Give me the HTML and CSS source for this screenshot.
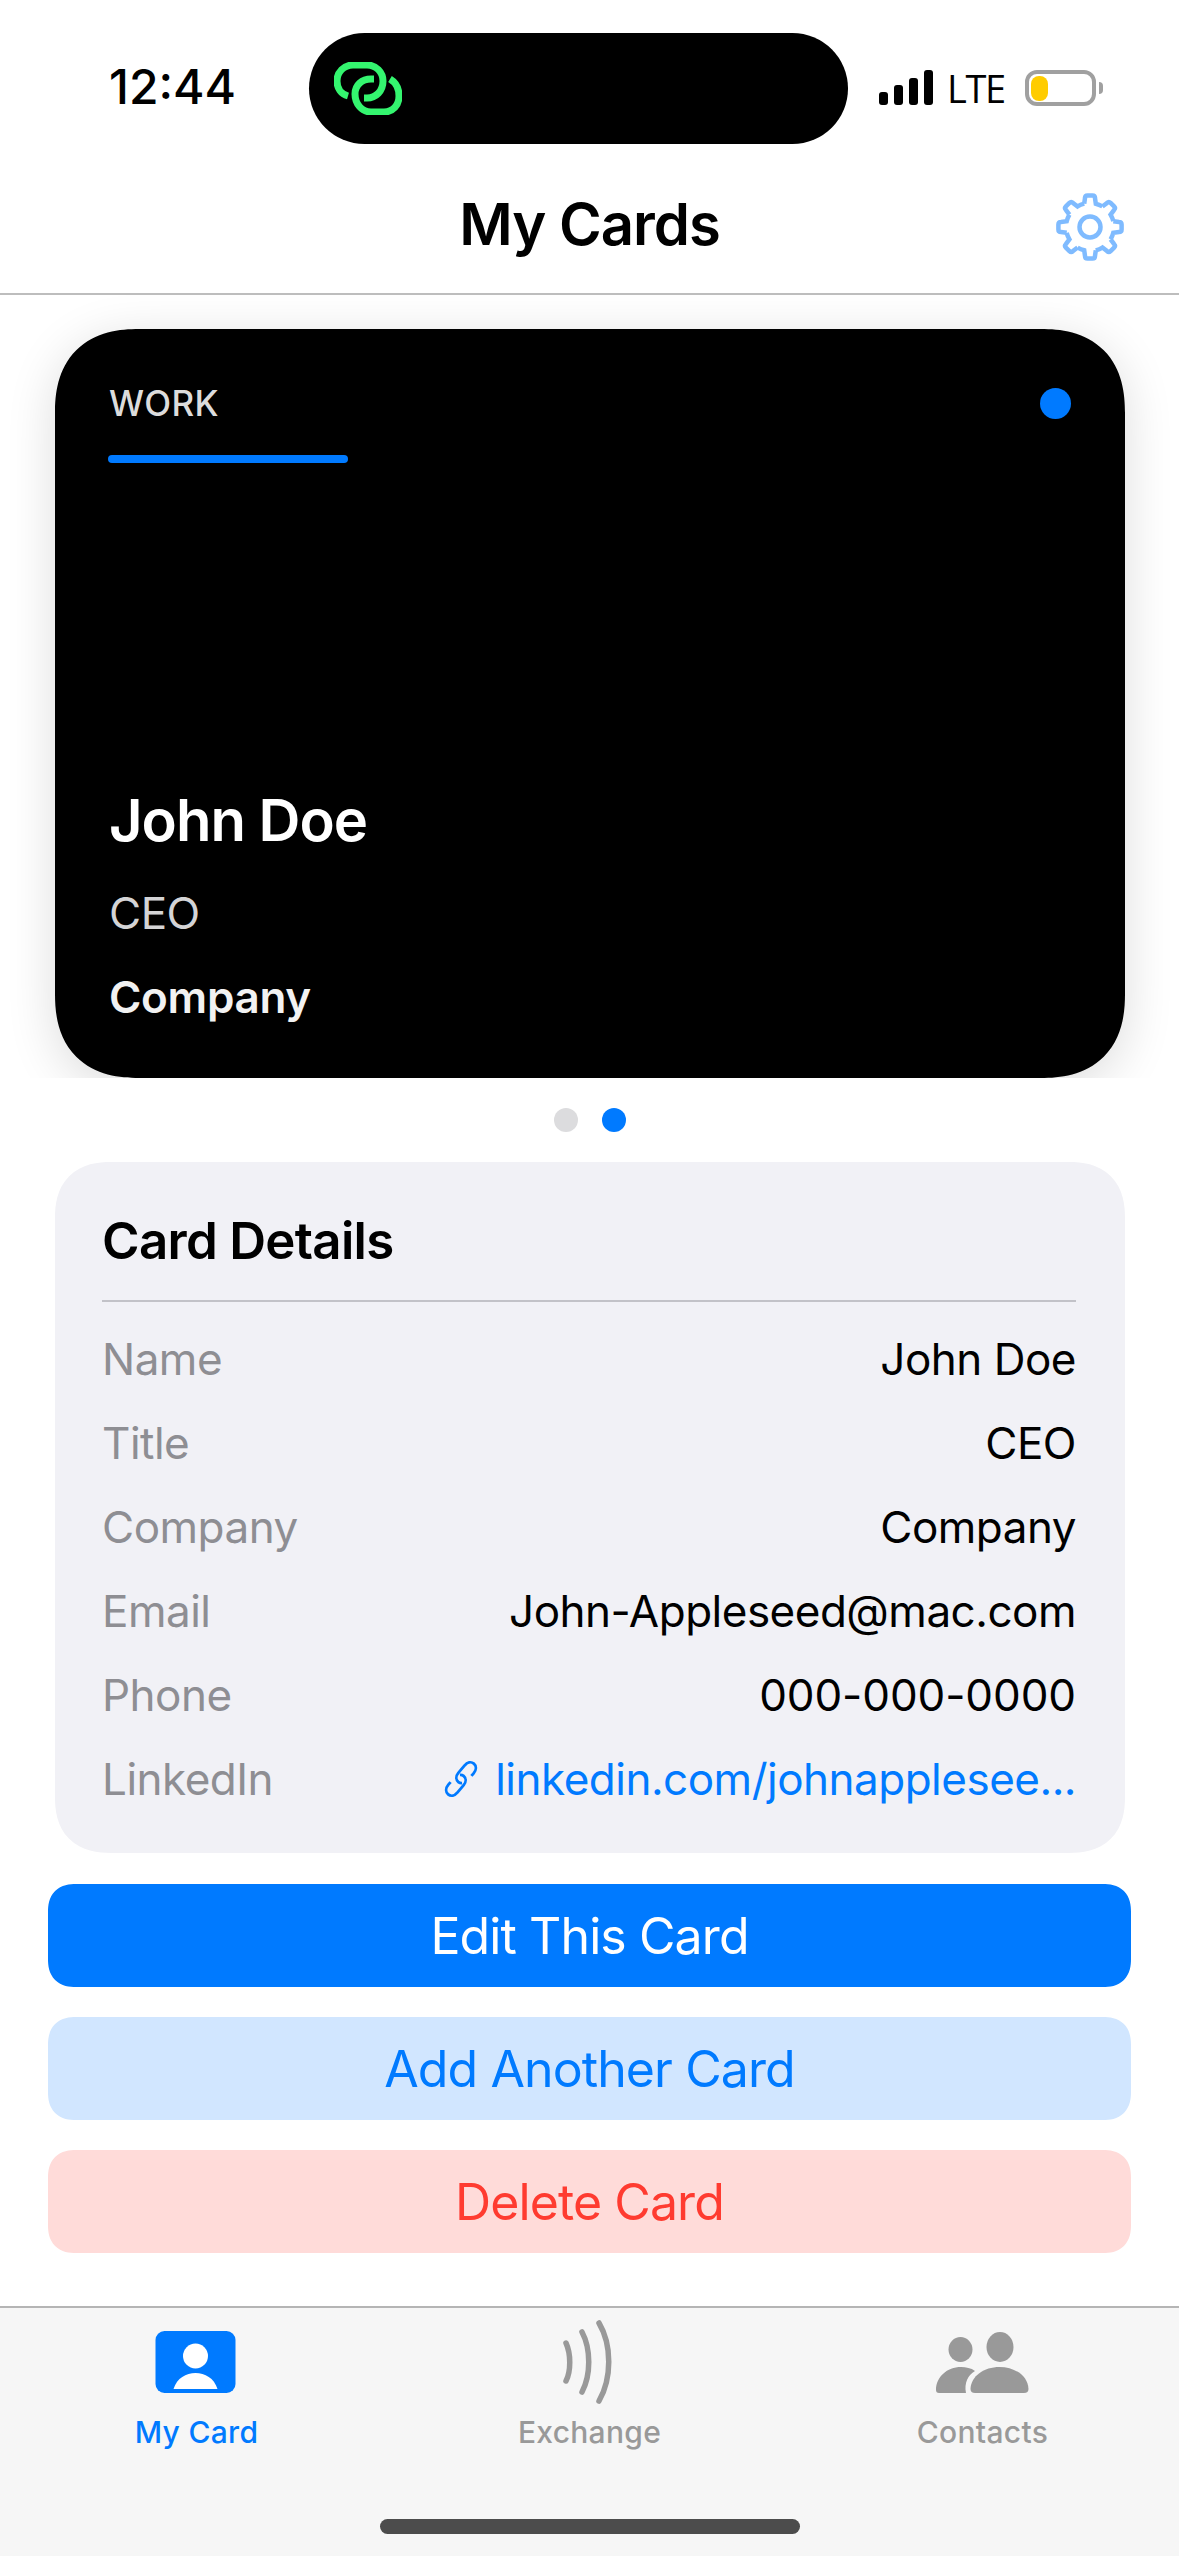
FILE: index.html
```html
<!DOCTYPE html>
<html lang="en">
<head>
    <meta charset="UTF-8">
    <meta name="viewport" content="width=device-width, initial-scale=1.0">
    <title>My Cards</title>
    <link rel="stylesheet" href="styles.css">
</head>
<body>
    <div class="screen">
        <div class="statusBar">
            <span class="clock">12:44</span>
            <div class="island">
                <svg class="islandIcon" width="68" height="53" viewBox="0 0 68 53">
                    <path d="M14 34C7 32 3 26 3 19C3 10 10 3 19 3H33C42 3 49 10 49 19C49 29 42 36 33 36H30"/>
                    <path d="M40 17H37C28 17 21 23 21 32C21 42 28 50 37 50H50C59 50 65 43 65 34C65 26 61 20 56 17"/>
                </svg>
            </div>
            <div class="statusRight">
                <div class="signal">
                    <i class="bar1"></i><i class="bar2"></i><i class="bar3"></i><i class="bar4"></i>
                </div>
                <span class="lte">LTE</span>
                <div class="battery"><div class="batteryFill"></div></div>
                <div class="batteryNub"></div>
            </div>
        </div>

        <header class="navBar">
            <h1>My Cards</h1>
            <svg class="gear" width="70" height="70" viewBox="-35 -35 70 70">
                <defs>
                    <path id="tooth" d="M-5.8 -23.3L-5 -29Q-5 -31.6 -2.5 -31.6H2.5Q5 -31.6 5 -29L5.8 -23.3Q9 -22.5 12.4 -20.6"/>
                </defs>
                <use href="#tooth"/>
                <use href="#tooth" transform="rotate(45)"/>
                <use href="#tooth" transform="rotate(90)"/>
                <use href="#tooth" transform="rotate(135)"/>
                <use href="#tooth" transform="rotate(180)"/>
                <use href="#tooth" transform="rotate(225)"/>
                <use href="#tooth" transform="rotate(270)"/>
                <use href="#tooth" transform="rotate(315)"/>
                <circle r="10.5"/>
            </svg>
        </header>

        <div class="carousel">
            <div class="bizCard">
                <div class="cardTop">
                    <div>
                        <div class="cardTag">WORK</div>
                        <div class="cardLine"></div>
                    </div>
                    <div class="cardDot"></div>
                </div>
                <div class="cardInfo">
                    <div class="cardName">John Doe</div>
                    <div class="cardTitle">CEO</div>
                    <div class="cardCompany">Company</div>
                </div>
            </div>
        </div>

        <div class="pager">
            <span class="pagerDot"></span>
            <span class="pagerDot active"></span>
        </div>

        <section class="details">
            <h2>Card Details</h2>
            <div class="row"><span class="rowLabel">Name</span><span>John Doe</span></div>
            <div class="row"><span class="rowLabel">Title</span><span>CEO</span></div>
            <div class="row"><span class="rowLabel">Company</span><span>Company</span></div>
            <div class="row"><span class="rowLabel">Email</span><span>John-Appleseed@mac.com</span></div>
            <div class="row"><span class="rowLabel">Phone</span><span class="rowPhone">000-000-0000</span></div>
            <div class="row">
                <span class="rowLabel">LinkedIn</span>
                <span class="rowLink">
                    <svg class="linkIcon" width="36" height="36" viewBox="0 0 36 36">
                        <g transform="rotate(-50 18 18)">
                            <path d="M9 12H5.5C1 12 -2 14.5 -2 18C-2 21.500 1 24 5.500 24H15C19 24 22 21.500 22 18C22 16.500 21.500 15.500 20.500 14.500"/>
                            <path d="M27 24H30.500C35 24 38 21.500 38 18C38 14.500 35 12 30.500 12H21C17 12 14 14.500 14 18C14 19.500 14.500 20.500 15.500 21.500"/>
                        </g>
                    </svg>
                    linkedin.com/johnapplesee...
                </span>
            </div>
        </section>

        <div class="actions">
            <button class="btn btnBlue">Edit This Card</button>
            <button class="btn btnSoft">Add Another Card</button>
            <button class="btn btnRed">Delete Card</button>
        </div>

        <nav class="tabBar">
            <div class="tabs">
                <div class="tab tabActive">
                    <svg width="80" height="80" viewBox="0 0 80 80">
                        <rect x="-1.5" y="8" width="80" height="62" rx="9" fill="#007aff"/>
                        <circle cx="38.500" cy="33" r="12.500" fill="#fff"/>
                        <path d="M16.500 66C20 55 29 50 38.500 50C48 50 57 55 60.500 66Z" fill="#fff"/>
                    </svg>
                    <span>My Card</span>
                </div>
                <div class="tab">
                    <svg width="80" height="80" viewBox="0 0 80 80" fill="none" stroke="#999" stroke-width="5.500" stroke-linecap="round">
                        <path d="M16 20C21 31 21 48 16 58"/>
                        <path d="M32 9C41 26 41 52 32 69"/>
                        <path d="M49 0C62 22 62 55 49 78"/>
                    </svg>
                    <span>Exchange</span>
                </div>
                <div class="tab">
                    <svg width="96" height="80" viewBox="0 0 96 80" fill="#999">
                        <ellipse cx="25.500" cy="26.500" rx="12" ry="12.500"/>
                        <ellipse cx="65" cy="24" rx="13.500" ry="15"/>
                        <path d="M1 67C1 54 12 44 26 44C31 44 36 45 40 48C33 52 29 60 31 70H4Q1 70 1 67Z"/>
                        <path d="M35.500 66C36 53 49 44 64.500 44C80 44 93 53 93.500 66Q93.500 70 89 70H40Q35.500 70 35.500 66Z"/>
                    </svg>
                    <span>Contacts</span>
                </div>
            </div>
            <div class="homeBar"></div>
        </nav>
    </div>
</body>
</html>
```
FILE: styles.css
```css
* {
    box-sizing: border-box;
}
body {
    margin: 0;
    background: #fff;
    font-family: Inter, "Liberation Sans", sans-serif;
    color: #000;
}
.screen {
    width: 1179px;
    height: 2556px;
    overflow: hidden;
    display: flex;
    flex-direction: column;
}

/* status bar */
.statusBar {
    height: 144px;
    padding-top: 33px;
    display: flex;
    align-items: flex-start;
}
.clock {
    width: 309px;
    padding: 31px 0 0 109px;
    font-size: 48px;
    line-height: 46px;
    font-weight: 500;
}
.island {
    width: 539px;
    height: 111px;
    border-radius: 56px;
    background: #000;
    padding: 29px 0 0 25px;
}
.islandIcon {
    display: block;
    fill: none;
    stroke: #34f56f;
    stroke-width: 7;
}
.statusRight {
    padding: 37px 0 0 31px;
    display: flex;
    align-items: flex-start;
}
.signal {
    display: flex;
    align-items: flex-end;
    gap: 6px;
    height: 35px;
}
.signal i {
    display: block;
    width: 9px;
    border-radius: 3px;
    background: #000;
}
.bar1 { height: 13px; }
.bar2 { height: 20px; }
.bar3 { height: 27px; }
.bar4 { height: 35px; }
.lte {
    margin-left: 14px;
    width: 61px;
    font-family: "Open Sans", sans-serif;
    font-size: 38px;
    line-height: 36px;
    font-weight: 500;
    letter-spacing: -1.4px;
}
.battery {
    margin-left: 17px;
    width: 71px;
    height: 36px;
    border: 4px solid #a0a0a0;
    border-radius: 12px;
    padding: 2px;
}
.batteryFill {
    width: 17px;
    height: 25px;
    border-radius: 8px;
    background: #ffcc00;
}
.batteryNub {
    margin: 12px 0 0 3px;
    width: 4px;
    height: 12px;
    border-radius: 0 6px 6px 0;
    background: #a0a0a0;
}

/* nav */
.navBar {
    height: 151px;
    padding-top: 10px;
    border-bottom: 2px solid #bdbdbd;
    display: flex;
    align-items: center;
    justify-content: center;
    position: relative;
}
.navBar h1 {
    margin: 0;
    font-size: 58px;
    font-weight: 600;
    letter-spacing: -1px;
}
.gear {
    position: absolute;
    right: 54px;
    top: 48px;
    fill: none;
    stroke: #7fbbff;
    stroke-width: 4.500;
}

/* card */
.carousel {
    height: 783px;
    padding: 34px 54px 0 55px;
    overflow: hidden;
}
.bizCard {
    height: 749px;
    border-radius: 84px;
    corner-shape: superellipse(1.25);
    background: #000;
    box-shadow: 0 10px 50px rgba(0, 0, 0, 0.14);
    padding: 56px 54px 0;
    color: #fff;
}
.cardTop {
    display: flex;
    justify-content: space-between;
}
.cardTag {
    font-size: 35px;
    line-height: 36px;
    font-weight: 500;
    color: #dcdcdc;
    letter-spacing: 0.4px;
}
.cardLine {
    margin: 34px 0 0 -1px;
    width: 240px;
    height: 8px;
    border-radius: 4px;
    background: #007aff;
}
.cardDot {
    margin: 3px 0 0;
    width: 31px;
    height: 31px;
    border-radius: 50%;
    background: #007aff;
}
.cardInfo {
    margin-top: 322px;
}
.cardName {
    font-size: 58px;
    line-height: 70px;
    font-weight: 600;
    letter-spacing: -1px;
}
.cardTitle {
    margin-top: 33px;
    font-size: 44px;
    line-height: 50px;
    color: #d4d4d6;
    letter-spacing: -0.5px;
}
.cardCompany {
    margin-top: 34px;
    font-size: 44px;
    line-height: 50px;
    font-weight: 600;
    letter-spacing: -0.3px;
    color: #f2f2f2;
}

/* pager */
.pager {
    height: 84px;
    padding-top: 30px;
    display: flex;
    justify-content: center;
    gap: 24px;
    padding-left: 1px;
}
.pagerDot {
    width: 24px;
    height: 24px;
    border-radius: 50%;
    background: #dcdcde;
}
.pagerDot.active {
    background: #007aff;
}

/* details */
.details {
    margin: 0 54px 0 55px;
    height: 691px;
    border-radius: 56px;
    corner-shape: superellipse(1.25);
    background: #f1f1f6;
    padding: 48px 49px 0 47px;
}
.details h2 {
    margin: 0 0 15px;
    height: 92px;
    padding-bottom: 29px;
    border-bottom: 2px solid #c2c2c8;
    font-size: 51px;
    line-height: 62px;
    font-weight: 600;
    letter-spacing: -0.7px;
}
.row {
    height: 84px;
    display: flex;
    justify-content: space-between;
    align-items: center;
    font-size: 44px;
    letter-spacing: -0.5px;
}
.rowLabel {
    color: #8e8e93;
}
.rowPhone {
    letter-spacing: -0.1px;
}
.rowLink {
    color: #007aff;
    display: flex;
    align-items: center;
    gap: 16px;
}
.linkIcon {
    fill: none;
    stroke: #007aff;
    stroke-width: 2.800;
    overflow: visible;
}

/* buttons */
.actions {
    margin: 31px 48px 0;
    display: flex;
    flex-direction: column;
    gap: 30px;
}
.btn {
    height: 103px;
    border: 0;
    border-radius: 28px;
    corner-shape: superellipse(1.25);
    font-family: inherit;
    font-size: 50px;
    letter-spacing: -0.9px;
}
.btnBlue {
    background: #007aff;
    color: #fff;
}
.btnSoft {
    background: #d1e6ff;
    color: #007aff;
}
.btnRed {
    background: #ffdbd9;
    color: #ff3b30;
}

/* tabs */
.tabBar {
    margin-top: 53px;
    flex: 1;
    background: #f6f6f6;
    border-top: 2px solid #b5b5b5;
    display: flex;
    flex-direction: column;
}
.tabs {
    display: grid;
    grid-template-columns: repeat(3, 1fr);
    padding-top: 15px;
}
.tab {
    display: flex;
    flex-direction: column;
    align-items: center;
    color: #999;
    font-size: 30px;
    font-weight: 500;
    line-height: 36px;
    letter-spacing: 0.3px;
}
.tab svg {
    display: block;
    margin-bottom: 11px;
    overflow: visible;
}
.tabActive {
    color: #007aff;
}
.homeBar {
    margin: 69px auto 0;
    width: 420px;
    height: 15px;
    border-radius: 8px;
    background: #4c4c4c;
}
```
